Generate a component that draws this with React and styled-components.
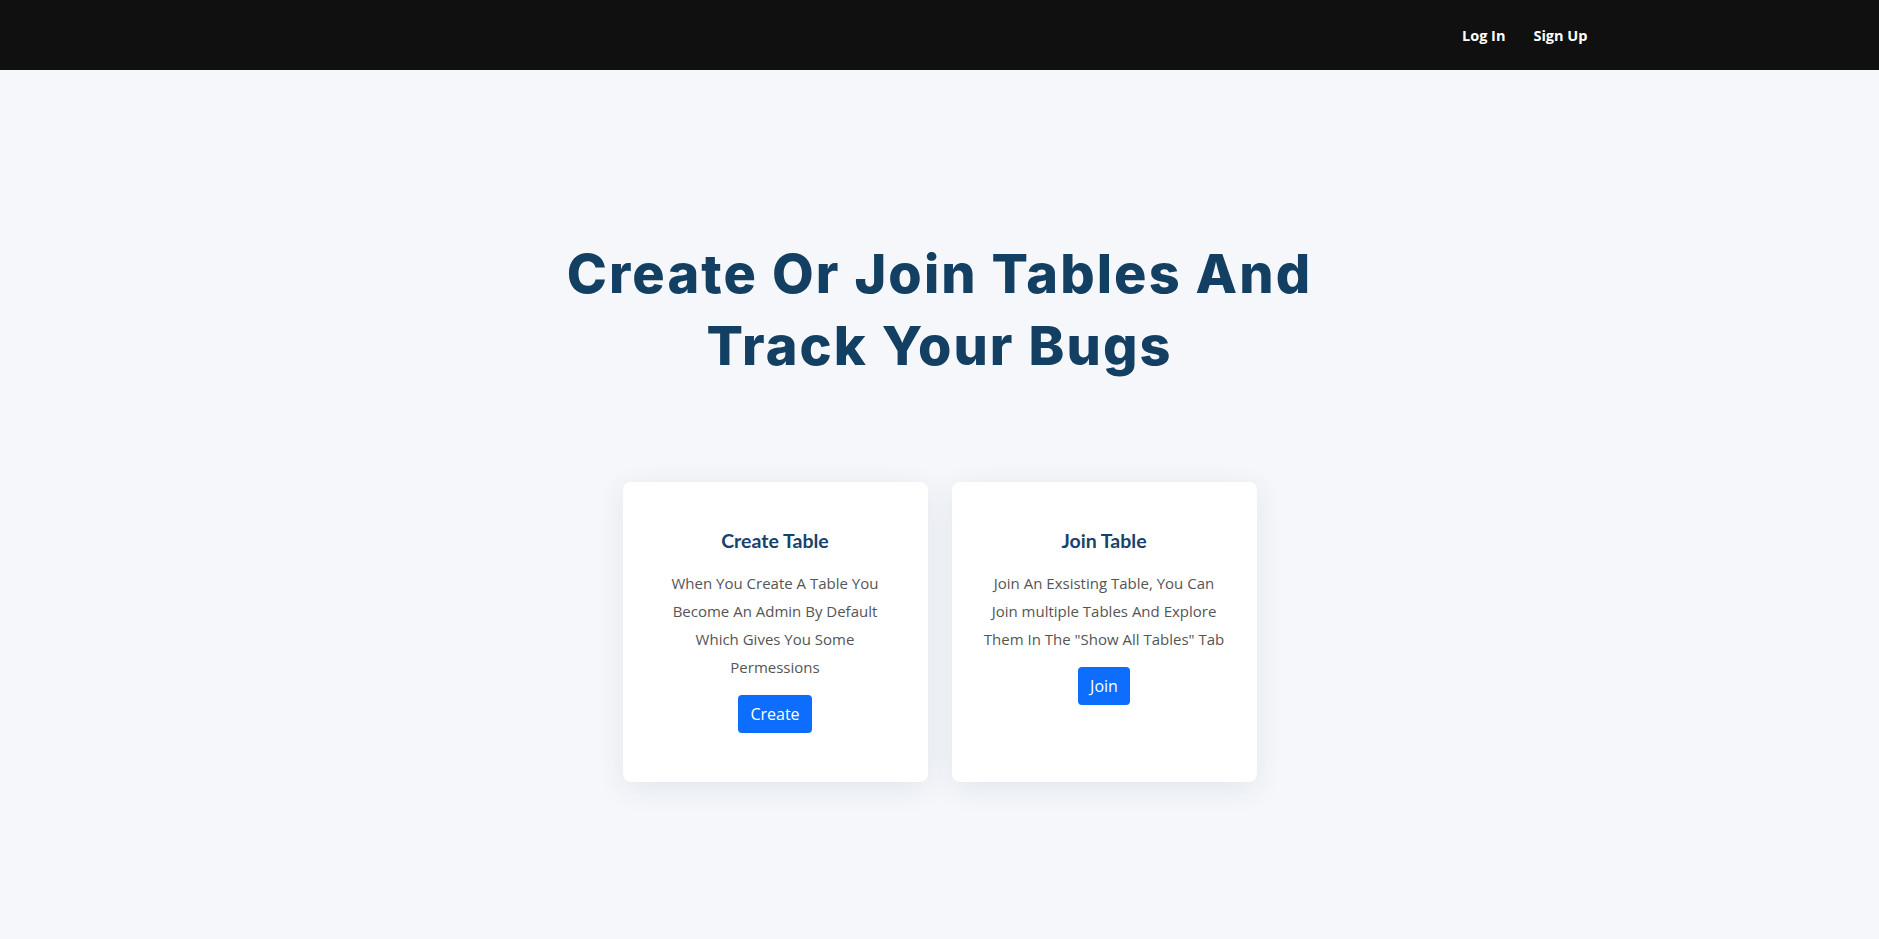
import React from "react";
import styled, { createGlobalStyle } from "styled-components";

const Global = createGlobalStyle`
  html, body { margin: 0; padding: 0; }
  body {
    background: #f5f7fa;
    font-family: "Open Sans", "Liberation Sans", sans-serif;
    min-height: 939px;
  }
  * { box-sizing: border-box; }
`;

const NavBar = styled.header`
  height: 70px;
  background: #101010;
  display: flex;
  justify-content: center;
`;

const NavInner = styled.nav`
  width: 1320px;
  padding: 0 12px;
  display: flex;
  justify-content: flex-end;
  align-items: center;
  gap: 28px;
`;

const NavLink = styled.a`
  color: #ffffff;
  font-family: "Open Sans", sans-serif;
  font-weight: 700;
  font-size: 14.5px;
  text-decoration: none;
  cursor: pointer;
`;

const Main = styled.main`
  display: flex;
  flex-direction: column;
  align-items: center;
  padding-top: 168px;
`;

const Heading = styled.h1`
  margin: 0;
  font-family: "Inter", "Liberation Sans", sans-serif;
  font-weight: 800;
  font-size: 54px;
  line-height: 72px;
  letter-spacing: 2.1px;
  color: #133f63;
  text-align: center;
  width: 840px;
`;

const Cards = styled.section`
  display: flex;
  gap: 24px;
  margin-top: 100px;
`;

const Card = styled.div`
  width: 305px;
  min-height: 300px;
  background: #ffffff;
  border-radius: 8px;
  box-shadow: 0 6px 30px rgba(30, 60, 110, 0.09);
  padding: 48px 32px;
  display: flex;
  flex-direction: column;
  align-items: center;
  text-align: center;
`;

const CardTitle = styled.h3`
  margin: 0 0 17px;
  font-family: "Lato", "Inter", sans-serif;
  font-weight: 700;
  font-size: 19.5px;
  line-height: 22px;
  color: #17436a;
`;

const CardText = styled.p`
  margin: 0 0 14px;
  font-family: "Open Sans", sans-serif;
  font-size: 15px;
  line-height: 28px;
  color: #555555;
`;

const Button = styled.button`
  background: #0d6efd;
  color: #ffffff;
  border: none;
  border-radius: 4px;
  font-family: "Open Sans", sans-serif;
  font-size: 16px;
  line-height: 26px;
  padding: 6px 12px;
  cursor: pointer;
`;

export default function App() {
  return (
    <>
      <Global />
      <NavBar>
        <NavInner>
          <NavLink>Log In</NavLink>
          <NavLink>Sign Up</NavLink>
        </NavInner>
      </NavBar>
      <Main>
        <Heading>Create Or Join Tables And Track Your Bugs</Heading>
        <Cards>
          <Card>
            <CardTitle>Create Table</CardTitle>
            <CardText>
              When You Create A Table You Become An Admin By Default Which Gives You Some Permessions
            </CardText>
            <Button>Create</Button>
          </Card>
          <Card>
            <CardTitle>Join Table</CardTitle>
            <CardText>
              Join An Exsisting Table, You Can Join multiple Tables And Explore Them In The "Show All Tables" Tab
            </CardText>
            <Button>Join</Button>
          </Card>
        </Cards>
      </Main>
    </>
  );
}
